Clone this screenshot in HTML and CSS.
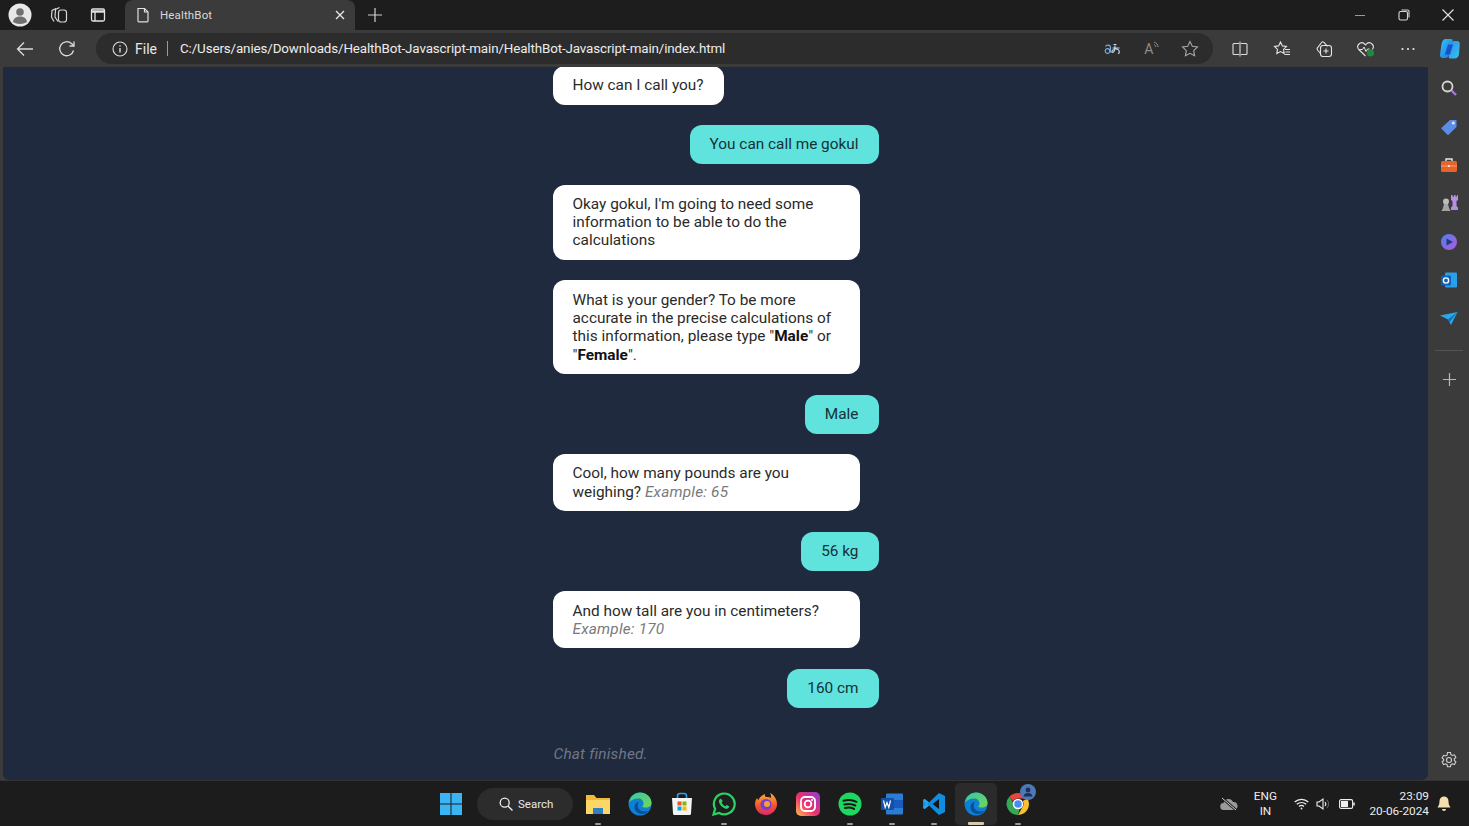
FILE: index.html
```html
<!DOCTYPE html>
<html lang="en">
<head>
  <meta charset="UTF-8" />
  <title>HealthBot</title>
  <link rel="stylesheet" href="styles.css">
</head>
<body>
  <!-- Tab strip -->
  <div class="tabstrip">
    <div class="tab-left">
      <span class="strip-btn">
        <svg width="24" height="24" viewBox="0 0 24 24"><circle cx="12" cy="12" r="11.5" fill="#e8e8e8"/><circle cx="12" cy="9" r="3.8" fill="#707070"/><path d="M5 19c.6-4 3.4-5.5 7-5.5s6.400 1.500 7 5.500c-4 2.500-10 2.500-14 0z" fill="#707070"/></svg>
      </span>
      <span class="strip-btn">
        <svg width="18" height="18" viewBox="0 0 18 18" fill="none" stroke="#d6d6d6" stroke-width="1.200"><path d="M6 2.500 2 4.500 1.500 11l2.500 4.500"/><path d="M9.500 1.500 5.500 3.500 5 11l3 4.500"/><rect x="8.500" y="4" width="8" height="12" rx="2.500"/></svg>
      </span>
      <span class="strip-btn">
        <svg width="16" height="16" viewBox="0 0 16 16" fill="none" stroke="#e4e4e4" stroke-width="1.300"><rect x="1.500" y="2" width="13" height="12" rx="1.500"/><path d="M1.500 4.500h13" stroke-width="2.400"/><path d="M5 5v9"/></svg>
      </span>
    </div>
    <div class="tab">
      <svg width="14" height="16" viewBox="0 0 14 16" fill="none" stroke="#e0e0e0" stroke-width="1.200"><path d="M2 1.500h6.500L12 5v9a.8.8 0 0 1-.8.8H2.800A.8.800 0 0 1 2 14z"/><path d="M8.500 1.500V5H12"/></svg>
      <span class="tab-title">HealthBot</span>
      <svg class="tab-close" width="10" height="10" viewBox="0 0 10 10" stroke="#e8e8e8" stroke-width="1.300"><path d="M1 1l8 8M9 1l-8 8"/></svg>
    </div>
    <span class="new-tab">
      <svg width="14" height="14" viewBox="0 0 14 14" stroke="#d0d0d0" stroke-width="1.200"><path d="M7 0v14M0 7h14"/></svg>
    </span>
    <div class="window-btns">
      <svg width="12" height="12" viewBox="0 0 12 12" stroke="#9a9a9a" stroke-width="1"><path d="M1 6.500h10"/></svg>
      <svg width="12" height="12" viewBox="0 0 12 12" fill="none" stroke="#d8d8d8" stroke-width="1.100"><rect x="1" y="2.500" width="8.500" height="8.500" rx="1.500"/><path d="M3.500 1h6a1.500 1.500 0 0 1 1.500 1.500v6"/></svg>
      <svg width="12" height="12" viewBox="0 0 12 12" stroke="#e4e4e4" stroke-width="1.100"><path d="M.5.5l11 11M11.500.5l-11 11"/></svg>
    </div>
  </div>

  <!-- Address bar -->
  <div class="toolbar">
    <span class="nav-btn nav-back">
      <svg width="18" height="16" viewBox="0 0 18 16" fill="none" stroke="#dcdcdc" stroke-width="1.300"><path d="M17 8H1.500M8 1.500 1.500 8 8 14.500"/></svg>
    </span>
    <span class="nav-btn">
      <svg width="18" height="18" viewBox="0 0 18 18" fill="none" stroke="#dcdcdc" stroke-width="1.300"><path d="M15.500 10.500A7 7 0 1 1 13.500 3.600L16 6"/><path d="M16 1.500V6h-4.500"/></svg>
    </span>
    <div class="address">
      <svg width="16" height="16" viewBox="0 0 16 16" fill="none" stroke="#dcdcdc" stroke-width="1.100"><circle cx="8" cy="8" r="7"/><path d="M8 7v4.500" stroke-width="1.400"/><path d="M8 4.200v1.400" stroke-width="1.400"/></svg>
      <span class="addr-file">File</span>
      <span class="addr-sep"></span>
      <span class="addr-url">C:/Users/anies/Downloads/HealthBot-Javascript-main/HealthBot-Javascript-main/index.html</span>
      <span class="addr-icons">
        <span class="addr-icon">
          <svg width="17" height="12" viewBox="0 0 17 12" fill="none" stroke="#79ade2" stroke-width="1.200"><path d="M1.500 3.500C2.500 1.500 6.500 1.500 6.500 4.500v5M1.200 8a2.300 2.300 0 1 0 4.600 0 2.300 2.300 0 1 0-4.600 0"/><path d="M8.500 5h7M11 2.500c0 4-1 7-2.500 7-1.500 0 0-3.500 3-3.500 2.500 0 3.800 1.500 3.800 3 0 .8-.5 1.500-1.300 1.800M9.500 1.500h3" stroke="#c4d6ea"/></svg>
        </span>
        <span class="addr-icon read-aloud">A<svg width="7" height="9" viewBox="0 0 7 9" fill="none" stroke="#8c8c8c"><path d="M1 1c2.500.8 4 2.500 4 5M1 3.500c1 .4 1.800 1.200 1.800 2.500"/></svg></span>
        <span class="addr-icon">
          <svg width="18" height="18" viewBox="0 0 18 18" fill="none" stroke="#a8a8a8" stroke-width="1.100"><path d="M9 1.500l2.300 4.800 5.200.7-3.800 3.600.9 5.200L9 13.300l-4.600 2.500.9-5.200L1.500 7l5.200-.7z"/></svg>
        </span>
      </span>
    </div>
    <div class="tool-icons">
      <span class="tool-btn"><svg width="16" height="16" viewBox="0 0 16 16" fill="none" stroke="#dedede" stroke-width="1.100"><path d="M7 2.500H2A1 1 0 0 0 1 3.500v9a1 1 0 0 0 1 1h5M9 2.500h5a1 1 0 0 1 1 1v9a1 1 0 0 1-1 1H9"/><path d="M8 .5v15"/></svg></span>
      <span class="tool-btn"><svg width="18" height="18" viewBox="0 0 18 18" fill="none" stroke="#e4e4e4" stroke-width="1.100"><path d="M7.500 2l1.900 3.900 4.100.6-3 2.900.7 4.100-3.700-1.900-3.700 1.900.7-4.100-3-2.900 4.100-.6z"/><path d="M12 9.500h5M12.500 12h4.500M11.500 14.500h5.500"/></svg></span>
      <span class="tool-btn"><svg width="18" height="18" viewBox="0 0 18 18" fill="none" stroke="#e4e4e4" stroke-width="1.100"><rect x="5.500" y="5.500" width="11" height="11" rx="2.500"/><path d="M11 8.500v5M8.500 11h5"/><path d="M5.500 13.500 2.500 10a1.800 1.800 0 0 1 .2-2.500l3.800-5a1.800 1.800 0 0 1 2.500-.2l3.500 4"/></svg></span>
      <span class="tool-btn"><svg width="20" height="18" viewBox="0 0 20 18"><path d="M9.500 16 2.800 9.500a4 4 0 0 1 5.700-5.600l1 1 1-1a4 4 0 0 1 5.700 5.600" fill="none" stroke="#e4e4e4" stroke-width="1.100"/><path d="M3 9.500h3.500l1.500-2.500 2 4.500 1.500-2.500h2" fill="none" stroke="#e4e4e4"/><circle cx="14.500" cy="13" r="3.600" fill="#1f8a3c"/></svg></span>
      <span class="tool-btn"><svg width="16" height="16" viewBox="0 0 16 16" fill="#e4e4e4"><circle cx="2.500" cy="8" r="1.100"/><circle cx="8" cy="8" r="1.100"/><circle cx="13.500" cy="8" r="1.100"/></svg></span>
      <span class="tool-btn"><svg width="24" height="24" viewBox="0 0 24 24"><defs><linearGradient id="cpA" x1="0" y1="0" x2="1" y2="1"><stop offset="0" stop-color="#38c6f4"/><stop offset="1" stop-color="#1a6fe0"/></linearGradient><linearGradient id="cpB" x1="0" y1="0" x2="1" y2="1"><stop offset="0" stop-color="#2d8cf0"/><stop offset="1" stop-color="#35c7e8"/></linearGradient></defs><path d="M8 2h5c1.500 0 2 1 1.600 2.300L11 18c-.5 2-1.800 3-3.500 3H5c-2 0-3-1.200-3-3l1.500-11C4 4 5.500 2 8 2z" fill="url(#cpA)"/><path d="M15 4h4c2 0 3 1.400 2.800 3.200L21 17c-.3 2.800-2 4.500-4.500 4.500H12c-1.200 0-1.600-1-1.200-2.200L14 6c.2-1 .5-2 1-2z" fill="url(#cpB)"/><path d="M10 7.500h5l-3 10H7z" fill="#1553c9"/></svg></span>
    </div>
  </div>

  <div class="window-body">
    <!-- Chat page -->
    <main class="page">
      <div class="chat">
        <div class="bubble bot">How can I call you?</div>
        <div class="bubble user">You can call me gokul</div>
        <div class="bubble bot">Okay gokul, I'm going to need some information to be able to do the calculations</div>
        <div class="bubble bot">What is your gender? To be more accurate in the precise calculations of this information, please type "<b>Male</b>" or "<b>Female</b>".</div>
        <div class="bubble user">Male</div>
        <div class="bubble bot">Cool, how many pounds are you weighing? <i>Example: 65</i></div>
        <div class="bubble user">56 kg</div>
        <div class="bubble bot">And how tall are you in centimeters? <i class="nowrap">Example: 170</i></div>
        <div class="bubble user">160 cm</div>
        <div class="finished">Chat finished.</div>
      </div>
    </main>

    <!-- Edge sidebar -->
    <aside class="sidebar">
      <span class="side-item"><svg width="18" height="18" viewBox="0 0 18 18" fill="none"><circle cx="7.500" cy="7.500" r="5" stroke="#d6d6d6" stroke-width="1.800"/><path d="M11.500 11.500l4.500 4.500" stroke="#a878d8" stroke-width="2.400"/></svg></span>
      <span class="side-item"><svg width="18" height="18" viewBox="0 0 18 18"><path d="M10 2h6.500v7L8 17.200 1 10.200z" fill="#5b8de8"/><circle cx="13.300" cy="5" r="1.500" fill="#dfe8fa"/></svg></span>
      <span class="side-item"><svg width="18" height="18" viewBox="0 0 18 18"><path d="M6 5V3h6v2" fill="none" stroke="#e8e8e8" stroke-width="1.400"/><rect x="1" y="5" width="16" height="11" rx="1.500" fill="#e8622a"/><path d="M1 10h16" stroke="#f7a078"/><rect x="8" y="9" width="2" height="2" fill="#fde4d8"/></svg></span>
      <span class="side-item"><svg width="20" height="20" viewBox="0 0 20 20"><circle cx="7" cy="8.500" r="3" fill="#bcbcbc"/><path d="M5 11h4l1 4 1.500 3h-9L4 15z" fill="#a4a4a4"/><path d="M12 2h1.500v1.500H15V2h1.500v1.500H18V2h1v5l-1.500 1v5l1.500 1.500V17h-7v-2.500L13.500 13V8L12 7z" fill="#b690e0"/></svg></span>
      <span class="side-item"><svg width="18" height="18" viewBox="0 0 18 18"><defs><linearGradient id="m365" x1="0" y1="0" x2="1" y2="1"><stop offset="0" stop-color="#4f7ff0"/><stop offset="1" stop-color="#b05ad8"/></linearGradient></defs><circle cx="9" cy="9" r="8" fill="url(#m365)"/><path d="M6.500 5.500 13 9l-6.500 3.500z" fill="#1f3b80"/></svg></span>
      <span class="side-item"><svg width="18" height="18" viewBox="0 0 18 18"><rect x="5" y="1.500" width="12" height="15" rx="1.200" fill="#2aa0e8"/><rect x="1" y="4.500" width="10" height="10" rx="1.200" fill="#0a63b8"/><circle cx="6" cy="9.500" r="2.600" fill="none" stroke="#fff" stroke-width="1.400"/></svg></span>
      <span class="side-item"><svg width="18" height="14" viewBox="0 0 18 14"><path d="M0 3.500 17.500 0 11 13 8 7.500z" fill="#28a8ea"/><path d="M8 7.500 17.500 0 9.500 10z" fill="#0f6cbd"/></svg></span>
      <span class="side-rule"></span>
      <span class="side-item"><svg width="13" height="13" viewBox="0 0 13 13" stroke="#b8b8b8" stroke-width="1.200"><path d="M6.500 0v13M0 6.500h13"/></svg></span>
      <svg class="side-gear" width="18" height="18" viewBox="0 0 18 18" fill="none" stroke="#d0d0d0" stroke-width="1.100"><circle cx="9" cy="9" r="2.500"/><path d="M7.500 1.500h3l.4 2.100 1.500.9 2-.7 1.500 2.600-1.600 1.400v1.700l1.600 1.400-1.500 2.600-2-.7-1.500.9-.4 2.100h-3l-.4-2.100-1.500-.9-2 .7-1.500-2.600 1.600-1.400V8.300L2.100 6.900l1.500-2.600 2 .7 1.500-.9z"/></svg>
    </aside>
  </div>

  <!-- Windows taskbar -->
  <footer class="taskbar">
    <div class="task-center">
      <span class="task-app win-logo">
        <svg width="24" height="24" viewBox="0 0 24 24"><path d="M1 1h10.500v10.500H1zM12.500 1H23v10.500H12.500zM1 12.500h10.500V23H1zM12.500 12.500H23V23H12.500z" fill="#3cb4f2"/></svg>
      </span>
      <div class="task-search">
        <svg width="14" height="14" viewBox="0 0 14 14" fill="none" stroke="#f0f0f0" stroke-width="1.300"><circle cx="5.700" cy="5.700" r="4.500"/><path d="M9 9l4.500 4.500"/></svg>
        <span>Search</span>
      </div>
      <span class="task-app open">
        <svg width="26" height="24" viewBox="0 0 26 24"><path d="M1 3h8l2.500 3H25v16H1z" fill="#f4b93a"/><path d="M1 8h24v14H1z" fill="#fbd765"/><rect x="8" y="16" width="10" height="6" fill="#2f7fc4"/></svg>
      </span>
      <span class="task-app">
        <svg width="24" height="24" viewBox="0 0 24 24"><defs><linearGradient id="edgeA" x1="0" y1="0" x2="1" y2="1"><stop offset="0" stop-color="#37c9a0"/><stop offset="1" stop-color="#71d65a"/></linearGradient></defs><circle cx="12" cy="12" r="11.500" fill="#0f7fd0"/><path d="M1 11C2 4 7 .5 12 .5c6 0 11.500 4.500 11.500 10.500 0 3-2.500 4.500-5.500 4.500-2 0-3.500-.5-4-1 1-.5 1.500-1.500 1.500-3 0-3-2.500-5-5-5C6 6.500 2.500 8 1 11z" fill="url(#edgeA)"/><path d="M10.500 10c-2 0-4 2-4 5 0 4 3.500 7 7 7 3 0 5.500-1 7.500-3.500-2 1-6 1.500-8.500 0-2.500-1.500-3.500-5-2-8.500z" fill="#0b4f9c"/></svg>
      </span>
      <span class="task-app">
        <svg width="24" height="24" viewBox="0 0 24 24"><path d="M7.500 6.500V4a2.500 2.500 0 0 1 2.500-2.500h4A2.500 2.500 0 0 1 16.500 4v2.500" fill="none" stroke="#2aa5ec" stroke-width="1.500"/><path d="M2 6h20l-1 15.500a1.500 1.500 0 0 1-1.500 1.500h-15A1.500 1.500 0 0 1 3 21.500z" fill="#f4f4f4"/><path d="M7.500 9.500h4v4h-4z" fill="#f25022"/><path d="M12.500 9.500h4v4h-4z" fill="#7fba00"/><path d="M7.500 14.500h4v4h-4z" fill="#00a4ef"/><path d="M12.500 14.500h4v4h-4z" fill="#ffb900"/></svg>
      </span>
      <span class="task-app open">
        <svg width="24" height="24" viewBox="0 0 24 24"><path d="M1.500 22.500l1.600-5.700A10.400 10.400 0 1 1 7.200 21z" fill="#1f1f1f" stroke="#2bd066" stroke-width="2.200"/><path d="M8.500 6.800c-1 .4-1.700 1.500-1.500 3 .5 3.200 3.700 6.400 7 7 1.500.2 2.600-.5 3-1.500l.2-1-2.600-1.300-1.100 1.200c-1.800-.6-3.200-2-3.900-3.800l1.200-1.100L9 6.700z" fill="#2bd066"/></svg>
      </span>
      <span class="task-app">
        <svg width="24" height="24" viewBox="0 0 24 24"><defs><linearGradient id="ffA" x1="0" y1="0" x2="0" y2="1"><stop offset="0" stop-color="#ffb02e"/><stop offset=".6" stop-color="#f2512e"/><stop offset="1" stop-color="#d92a6e"/></linearGradient></defs><path d="M12 23C5.500 23 1 18 1 12c0-2.500 1-4.500 2-6 .3 1 .8 1.700 1.500 2C5.500 5 8 3 11 2c-.5 1.500 0 2.500 1 3 2-.2 3.500 0 5 1 .3-1.800 0-3.500-1-5 4 2 7 6 7 11 0 6-5 11-11 11z" fill="url(#ffA)"/><circle cx="12" cy="12.500" r="5.500" fill="#7a3bd0"/><circle cx="13" cy="12" r="3" fill="#f2a03a"/></svg>
      </span>
      <span class="task-app">
        <svg width="24" height="24" viewBox="0 0 24 24"><defs><linearGradient id="igA" x1="0" y1="1" x2="1" y2="0"><stop offset="0" stop-color="#fdc04e"/><stop offset=".45" stop-color="#ee2f6b"/><stop offset="1" stop-color="#8e3bd6"/></linearGradient></defs><rect width="24" height="24" rx="5" fill="url(#igA)"/><rect x="5" y="5" width="14" height="14" rx="4" fill="none" stroke="#fff" stroke-width="1.800"/><circle cx="12" cy="12" r="3.300" fill="none" stroke="#fff" stroke-width="1.800"/><circle cx="16" cy="8" r="1" fill="#fff"/></svg>
      </span>
      <span class="task-app open">
        <svg width="24" height="24" viewBox="0 0 24 24"><circle cx="12" cy="12" r="11.500" fill="#1ed760"/><path d="M5.500 8.800c4.500-1.300 9-1 13 1M6.300 12.500c3.800-1 7.700-.8 11 1M7 16c3.200-.8 6.300-.6 9 .9" fill="none" stroke="#161616" stroke-width="2" stroke-linecap="round"/></svg>
      </span>
      <span class="task-app open">
        <svg width="24" height="24" viewBox="0 0 24 24"><rect x="6" y="1.500" width="17" height="21" rx="1" fill="#2b7cd3"/><path d="M6 8h17v8H6z" fill="#185abd"/><rect x="1" y="6" width="13" height="12" rx="1" fill="#1450a8"/><path d="M3 8.500l1.700 7 1.800-5 1.800 5 1.700-7" transform="translate(.5 0)" fill="none" stroke="#fff" stroke-width="1.200"/></svg>
      </span>
      <span class="task-app open">
        <svg width="24" height="24" viewBox="0 0 24 24"><path d="M17 1l6 3v16l-6 3L7 13.500 2.800 17 1 16V8l1.800-1L7 10.500z" fill="#0f8ee0"/><path d="M17 7 10.500 12 17 17z" fill="#161616"/><path d="M1 8l1.800-1L7 10.500 5 12 7 13.500 2.800 17 1 16l2.500-4z" fill="#2aa5ec"/></svg>
      </span>
      <span class="task-app active">
        <svg width="24" height="24" viewBox="0 0 24 24"><circle cx="12" cy="12" r="11.500" fill="#0f7fd0"/><path d="M1 11C2 4 7 .5 12 .5c6 0 11.500 4.500 11.500 10.500 0 3-2.500 4.500-5.500 4.500-2 0-3.500-.5-4-1 1-.5 1.500-1.500 1.500-3 0-3-2.500-5-5-5C6 6.500 2.500 8 1 11z" fill="url(#edgeA)"/><path d="M10.500 10c-2 0-4 2-4 5 0 4 3.500 7 7 7 3 0 5.500-1 7.500-3.500-2 1-6 1.500-8.500 0-2.500-1.500-3.500-5-2-8.500z" fill="#0b4f9c"/></svg>
      </span>
      <span class="task-app open chrome">
        <svg width="24" height="24" viewBox="0 0 24 24"><path d="M12 1a11 11 0 0 1 9.500 5.500H12a5.500 5.500 0 0 0-5 3L3.500 4.600A11 11 0 0 1 12 1z" fill="#e8453c"/><path d="M21.500 6.500A11 11 0 0 1 12 23l4.700-8.200A5.500 5.500 0 0 0 16.800 9z" fill="#fbc02d"/><path d="M12 23A11 11 0 0 1 3.500 4.600L8 12.500a5.500 5.500 0 0 0 6 3z" fill="#34a853"/><circle cx="12" cy="12" r="4.500" fill="#4a8af4" stroke="#fff" stroke-width="1.500"/></svg>
        <svg class="chrome-badge" width="16" height="16" viewBox="0 0 16 16"><circle cx="8" cy="8" r="8" fill="#4d78b8"/><circle cx="8" cy="6" r="2.400" fill="#1d2f50"/><path d="M3.500 12.500c.5-2.500 2.200-3.500 4.500-3.500s4 1 4.500 3.500z" fill="#1d2f50"/></svg>
      </span>
    </div>
    <div class="tray">
      <svg class="tray-cloud" width="18" height="14" viewBox="0 0 18 14"><path d="M4 13a3.500 3.500 0 0 1-.5-7A5 5 0 0 1 13 5a4 4 0 0 1 1 8z" fill="#9a9a9a"/><path d="M2 1l14 12" stroke="#1c1c1c" stroke-width="2.500"/><path d="M2 1l14 12" stroke="#cfcfcf" stroke-width="1"/></svg>
      <div class="tray-lang"><span>ENG</span><span>IN</span></div>
      <div class="tray-icons">
        <svg width="15" height="12" viewBox="0 0 15 12" fill="none" stroke="#f0f0f0" stroke-width="1.200"><path d="M.7 4a10 10 0 0 1 13.600 0M2.800 6.300a7 7 0 0 1 9.400 0M5 8.500a3.800 3.800 0 0 1 5 0"/><circle cx="7.500" cy="10.500" r=".9" fill="#f0f0f0" stroke="none"/></svg>
        <svg width="14" height="14" viewBox="0 0 14 14" fill="none" stroke="#f0f0f0" stroke-width="1.100"><path d="M1 5v4h2l4 3V2L3 5z"/><path d="M9 5a3 3 0 0 1 0 4" /><path d="M11 3a6 6 0 0 1 0 8" stroke="#666"/></svg>
        <svg width="16" height="10" viewBox="0 0 16 10" fill="none" stroke="#f0f0f0" stroke-width="1.100"><rect x=".6" y=".6" width="13" height="8.800" rx="1.500"/><rect x="2" y="2" width="7" height="6" fill="#f0f0f0" stroke="none"/><path d="M15 3.500v3" stroke-width="1.500"/></svg>
      </div>
      <div class="tray-clock"><span>23:09</span><span>20-06-2024</span></div>
      <svg class="tray-bell" width="14" height="16" viewBox="0 0 14 16"><path d="M7 .5a4.500 4.500 0 0 1 4.500 4.500c0 3 .7 4.500 2 6.500H.5c1.300-2 2-3.500 2-6.500A4.500 4.500 0 0 1 7 .5z" fill="#f5deb0"/><path d="M5 13h4a2 2 0 0 1-4 0z" fill="#f5deb0"/></svg>
    </div>
  </footer>
</body>
</html>
```

FILE: styles.css
```css
html,
body {
  height: 100%;
}

body {
  margin: 0;
  display: flex;
  flex-direction: column;
  overflow: hidden;
  background: #3b3b3b;
  font-family: Roboto, 'Liberation Sans', sans-serif;
  color: #ededed;
}

/* Tab strip */
.tabstrip {
  height: 30px;
  flex: none;
  display: flex;
  align-items: flex-end;
  background: #1d1d1d;
}

.tab-left {
  width: 125px;
  height: 30px;
  flex: none;
  display: flex;
  align-items: center;
}

.strip-btn {
  width: 39px;
  display: flex;
  justify-content: center;
}

.tab {
  width: 230px;
  height: 30px;
  flex: none;
  box-sizing: border-box;
  display: flex;
  align-items: center;
  padding: 0 10px 0 11px;
  gap: 10px;
  background: #3b3b3b;
  border-radius: 8px 8px 0 0;
}

.tab-title {
  flex: 1;
  font-size: 11.5px;
  letter-spacing: 0.15px;
  color: #d8d8d8;
}

.new-tab {
  width: 40px;
  height: 30px;
  display: flex;
  align-items: center;
  justify-content: center;
}

.window-btns {
  margin-left: auto;
  height: 30px;
  display: flex;
  align-items: center;
  gap: 32px;
  padding-right: 15px;
}

/* Address bar */
.toolbar {
  height: 37px;
  flex: none;
  display: flex;
  align-items: center;
  background: #3b3b3b;
}

.nav-btn {
  width: 42px;
  flex: none;
  display: flex;
  justify-content: center;
}

.nav-back {
  margin-left: 4px;
}

.address {
  width: 1117px;
  height: 31px;
  flex: none;
  margin-left: 8px;
  box-sizing: border-box;
  display: flex;
  align-items: center;
  padding: 0 4px 0 16px;
  background: #2c2c2c;
  border-radius: 16px;
  font-size: 14px;
}

.addr-file {
  margin-left: 7px;
  color: #e6e6e6;
}

.addr-sep {
  width: 1px;
  height: 15px;
  margin: 0 12px 0 10px;
  background: #9a9a9a;
}

.addr-url {
  font-size: 13.4px;
  letter-spacing: -0.13px;
  color: #ececec;
}

.addr-icons {
  margin-left: auto;
  display: flex;
  align-items: center;
}

.addr-icon {
  width: 38.5px;
  display: flex;
  justify-content: center;
  align-items: center;
}

.read-aloud {
  font-size: 14px;
  color: #8c8c8c;
  align-items: flex-start;
  padding-left: 2px;
  box-sizing: border-box;
}

.tool-icons {
  display: flex;
  align-items: center;
  margin-left: 6px;
}

.tool-btn {
  width: 42px;
  flex: none;
  display: flex;
  justify-content: center;
}

/* Page area */
.window-body {
  flex: 1;
  min-height: 0;
  display: flex;
}

.page {
  flex: 1;
  min-width: 0;
  margin-left: 3px;
  background: #1f2a3e;
  border-radius: 0 0 6px 6px;
  display: flex;
  justify-content: center;
  overflow: hidden;
}

.chat {
  width: 326px;
  height: 100%;
  box-sizing: border-box;
  display: flex;
  flex-direction: column;
  justify-content: flex-end;
  gap: 20.5px;
  padding-bottom: 17px;
  font-size: 15.36px;
  line-height: 18.3px;
}

.bubble {
  flex: none;
  box-sizing: border-box;
  max-width: 307px;
  padding: 10.3px 20px;
  border-radius: 12px;
}

.bot {
  align-self: flex-start;
  background: #fff;
  color: #2a2a2a;
}

.bot i {
  letter-spacing: 0.2px;
  color: #7a7a7a;
}

.bot b {
  color: #111;
}

.nowrap {
  white-space: nowrap;
}

.user {
  align-self: flex-end;
  background: #5fe3dc;
  color: #163038;
}

.finished {
  flex: none;
  margin-top: 16.4px;
  padding-left: 1px;
  letter-spacing: 0.2px;
  font-style: italic;
  color: #6f7787;
}

/* Edge sidebar */
.sidebar {
  width: 40px;
  flex: none;
  margin-left: 1px;
  display: flex;
  flex-direction: column;
  align-items: center;
  padding-top: 2px;
  box-sizing: border-box;
}

.side-item {
  height: 38.4px;
  flex: none;
  display: flex;
  align-items: center;
}

.side-rule {
  width: 28px;
  height: 1px;
  flex: none;
  margin: 12px 0 10px;
  background: #555;
}

.side-gear {
  margin-top: auto;
  margin-bottom: 11px;
}

/* Taskbar */
.taskbar {
  height: 46px;
  flex: none;
  display: grid;
  grid-template-columns: 1fr auto 1fr;
  background: #1c1c1c;
  border-top: 1px solid #333;
  box-sizing: border-box;
}

.task-center {
  grid-column: 2;
  display: flex;
  align-items: center;
}

.task-app {
  position: relative;
  width: 42px;
  height: 42px;
  display: flex;
  align-items: center;
  justify-content: center;
  border-radius: 5px;
}

.task-app.open::after,
.task-app.active::after {
  content: "";
  position: absolute;
  bottom: 0;
  left: 18px;
  width: 6px;
  height: 2px;
  border-radius: 1px;
  background: #9a9a9a;
}

.task-app.active {
  background: #2b2b2b;
}

.task-app.active::after {
  left: 13px;
  width: 16px;
  height: 3px;
  background: #d9c7ae;
}

.chrome-badge {
  position: absolute;
  top: 1px;
  right: 3px;
}

.task-search {
  width: 96px;
  height: 32px;
  margin: 0 4px 0 5px;
  box-sizing: border-box;
  display: flex;
  align-items: center;
  gap: 5px;
  padding-left: 22px;
  background: #2c2c2c;
  border-radius: 16px;
  font-size: 11.5px;
  color: #e8e8e8;
}

.tray {
  grid-column: 3;
  display: flex;
  align-items: center;
  justify-content: flex-end;
  padding-top: 1px;
  padding-right: 18px;
  font-size: 11.8px;
  line-height: 15.5px;
  color: #ececec;
}

.tray-lang {
  width: 30px;
  margin: 0 14px 0 12px;
  display: flex;
  flex-direction: column;
  align-items: center;
}

.tray-icons {
  display: flex;
  align-items: center;
  gap: 7px;
  margin-right: 14px;
}

.tray-icons svg:last-child {
  margin-left: 2px;
}

.tray-clock {
  display: flex;
  flex-direction: column;
  align-items: flex-end;
  margin-right: 8px;
}
```
